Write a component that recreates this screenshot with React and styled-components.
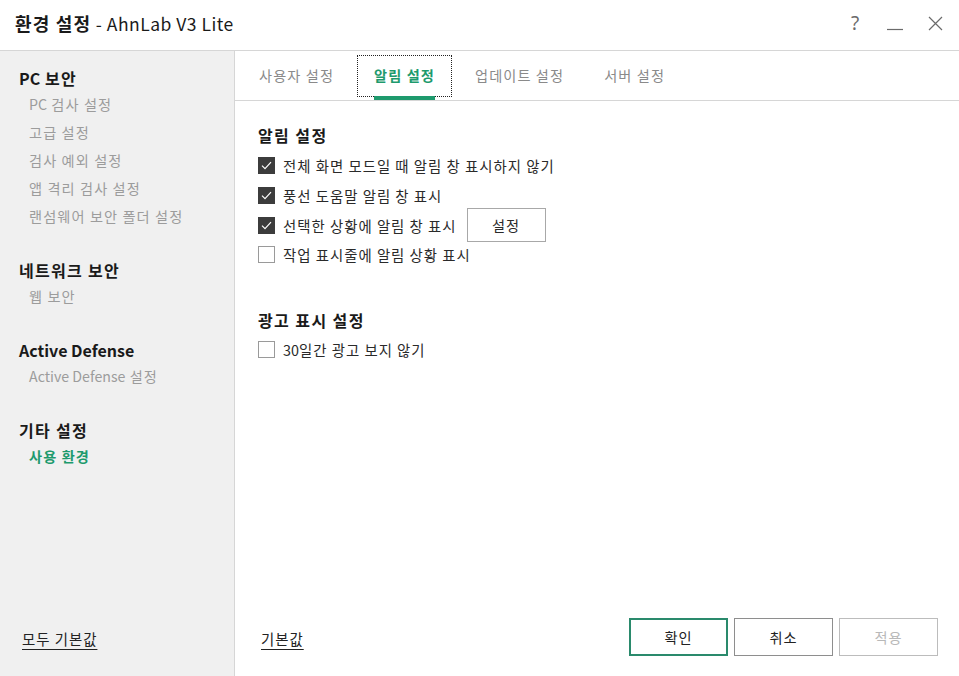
import React from "react";
import styled, { createGlobalStyle } from "styled-components";

const GREEN = "#1e9a6d";

const Global = createGlobalStyle`
  html, body { margin: 0; padding: 0; background: #fff; }
  body { font-family: "Noto Sans CJK KR", "Noto Sans", sans-serif; color: #222; }
  * { box-sizing: border-box; }
`;

const En = styled.span`
  letter-spacing: 0;
`;

const Window = styled.div`
  width: 959px;
  height: 676px;
  display: flex;
  flex-direction: column;
  background: #fff;
  overflow: hidden;
`;

const TitleBar = styled.div`
  height: 51px;
  flex: none;
  display: flex;
  align-items: center;
  padding: 0 0 4px 15px;
  border-bottom: 1px solid #d6d6d6;
`;

const Title = styled.div`
  font-size: 18px;
  line-height: 24px;
  color: #1a1a1a;
  flex: 1;
  b { font-weight: 700; letter-spacing: 1.2px; }
  span { font-weight: 400; font-size: 17.5px; letter-spacing: 0.5px; }
`;

const Controls = styled.div`
  display: flex;
  align-items: center;
  margin-right: 4px;
`;

const CtrlBtn = styled.div`
  width: 40px;
  height: 30px;
  display: flex;
  align-items: center;
  justify-content: center;
  color: #6b6b6b;
  font-size: 19px;
  font-family: "Noto Sans", sans-serif;
`;

const Body = styled.div`
  flex: 1;
  display: flex;
  min-height: 0;
`;

const Sidebar = styled.nav`
  width: 235px;
  flex: none;
  background: #f0f0f0;
  border-right: 1px solid #d6d6d6;
  display: flex;
  flex-direction: column;
  padding: 15px 0 26px 0;
`;

const Section = styled.div`
  display: flex;
  flex-direction: column;
  & + & { margin-top: 28px; }
`;

const SideHeading = styled.div`
  font-size: 16px;
  font-weight: 700;
  line-height: 24px;
  padding-left: 19px;
  letter-spacing: 1.3px;
  color: #1a1a1a;
`;

const SideItem = styled.div`
  font-size: 14.2px;
  line-height: 28px;
  padding-left: 29px;
  letter-spacing: 1.1px;
  color: ${(p) => (p.$active ? GREEN : "#9c9c9c")};
  font-weight: ${(p) => (p.$active ? 700 : 400)};
`;

const LinkText = styled.a`
  font-size: 14.4px;
  line-height: 20px;
  letter-spacing: 1px;
  color: #222;
  text-decoration: underline;
  text-underline-offset: 4px;
  text-decoration-thickness: 1px;
  cursor: pointer;
`;

const SideFooter = styled.div`
  margin-top: auto;
  padding-left: 22px;
`;

const Main = styled.div`
  flex: 1;
  display: flex;
  flex-direction: column;
  min-width: 0;
`;

const TabRow = styled.div`
  height: 50px;
  flex: none;
  display: flex;
  align-items: stretch;
  gap: 6px;
  padding-left: 7px;
  border-bottom: 1px solid #d6d6d6;
`;

const Tab = styled.div`
  position: relative;
  padding: 0 17px;
  display: flex;
  align-items: center;
  font-size: 14.2px;
  line-height: 20px;
  letter-spacing: 1.1px;
  padding-bottom: 1px;
  color: ${(p) => (p.$active ? GREEN : "#8a8a8a")};
  font-weight: ${(p) => (p.$active ? 700 : 400)};
  ${(p) =>
    p.$active &&
    `
    &::before {
      content: "";
      position: absolute;
      left: 0; right: 0; top: 4px; bottom: 3px;
      border: 1px dotted #222;
    }
    &::after {
      content: "";
      position: absolute;
      left: 17px; right: 17px; bottom: 0;
      height: 4px;
      background: ${GREEN};
    }
  `}
`;

const Content = styled.div`
  flex: 1;
  padding: 23px 23px 0 23px;
  display: flex;
  flex-direction: column;
`;

const Group = styled.div`
  display: flex;
  flex-direction: column;
  & + & { margin-top: 39px; }
`;

const GroupHeading = styled.div`
  font-size: 16px;
  font-weight: 700;
  line-height: 22px;
  letter-spacing: 1.4px;
  color: #1a1a1a;
  margin-bottom: ${(p) => p.$mb || 5}px;
`;

const Row = styled.label`
  height: 29.7px;
  display: flex;
  align-items: center;
  font-size: 14.4px;
  letter-spacing: 1px;
  color: #2a2a2a;
`;

const Box = styled.span`
  width: 17px;
  height: 17px;
  flex: none;
  margin-right: 8px;
  display: flex;
  align-items: center;
  justify-content: center;
  background: ${(p) => (p.$checked ? "#3c3c3c" : "#fff")};
  border: 1px solid ${(p) => (p.$checked ? "#3c3c3c" : "#9a9a9a")};
`;

const SmallButton = styled.button`
  margin: -2px 0 -2px 10px;
  width: 79px;
  height: 34px;
  background: #fff;
  border: 1px solid #a8a8a8;
  font-family: inherit;
  font-size: 14.2px;
  letter-spacing: 1px;
  color: #2a2a2a;
  padding: 0;
`;

const Footer = styled.div`
  height: 75px;
  flex: none;
  display: flex;
  align-items: center;
  padding: 0 21px 0 26px;
`;

const Buttons = styled.div`
  margin-left: auto;
  display: flex;
  gap: 6px;
  margin-top: -3px;
`;

const DialogButton = styled.button`
  width: 99px;
  height: 38px;
  background: #fff;
  font-family: inherit;
  font-size: 14.2px;
  letter-spacing: 1px;
  padding: 0;
  border: ${(p) =>
    p.$primary ? `2px solid #2a8a6c` : p.$disabled ? "1px solid #bcbcbc" : "1px solid #8e8e8e"};
  color: ${(p) => (p.$disabled ? "#b8b8b8" : "#222")};
`;

const Check = () => (
  <svg width="11" height="9" viewBox="0 0 11 9">
    <path d="M1 4.6 L4 7.6 L10 1.2" fill="none" stroke="#fff" strokeWidth="1.2" />
  </svg>
);

const CheckRow = ({ checked, children, extra }) => (
  <Row>
    <Box $checked={checked}>{checked && <Check />}</Box>
    {children}
    {extra}
  </Row>
);

export default function App() {
  return (
    <>
      <Global />
      <Window>
        <TitleBar>
          <Title>
            <b>환경 설정</b>
            <span> - AhnLab V3 Lite</span>
          </Title>
          <Controls>
            <CtrlBtn>?</CtrlBtn>
            <CtrlBtn>
              <svg width="16" height="16" viewBox="0 0 16 16">
                <path d="M0 14.5 H16" stroke="#6b6b6b" strokeWidth="1.2" />
              </svg>
            </CtrlBtn>
            <CtrlBtn>
              <svg width="15" height="15" viewBox="0 0 15 15">
                <path d="M1 1 L14 14 M14 1 L1 14" stroke="#6b6b6b" strokeWidth="1.2" />
              </svg>
            </CtrlBtn>
          </Controls>
        </TitleBar>
        <Body>
          <Sidebar>
            <Section>
              <SideHeading><En>PC</En> 보안</SideHeading>
              <SideItem><En>PC</En> 검사 설정</SideItem>
              <SideItem>고급 설정</SideItem>
              <SideItem>검사 예외 설정</SideItem>
              <SideItem>앱 격리 검사 설정</SideItem>
              <SideItem>랜섬웨어 보안 폴더 설정</SideItem>
            </Section>
            <Section>
              <SideHeading>네트워크 보안</SideHeading>
              <SideItem>웹 보안</SideItem>
            </Section>
            <Section>
              <SideHeading><En>Active Defense</En></SideHeading>
              <SideItem><En>Active Defense</En> 설정</SideItem>
            </Section>
            <Section>
              <SideHeading>기타 설정</SideHeading>
              <SideItem $active>사용 환경</SideItem>
            </Section>
            <SideFooter>
              <LinkText>모두 기본값</LinkText>
            </SideFooter>
          </Sidebar>
          <Main>
            <TabRow>
              <Tab>사용자 설정</Tab>
              <Tab $active>알림 설정</Tab>
              <Tab>업데이트 설정</Tab>
              <Tab>서버 설정</Tab>
            </TabRow>
            <Content>
              <Group>
                <GroupHeading>알림 설정</GroupHeading>
                <CheckRow checked>전체 화면 모드일 때 알림 창 표시하지 않기</CheckRow>
                <CheckRow checked>풍선 도움말 알림 창 표시</CheckRow>
                <CheckRow checked extra={<SmallButton>설정</SmallButton>}>
                  선택한 상황에 알림 창 표시
                </CheckRow>
                <CheckRow>작업 표시줄에 알림 상황 표시</CheckRow>
              </Group>
              <Group>
                <GroupHeading $mb={4}>광고 표시 설정</GroupHeading>
                <CheckRow><En>30</En>일간 광고 보지 않기</CheckRow>
              </Group>
            </Content>
            <Footer>
              <LinkText>기본값</LinkText>
              <Buttons>
                <DialogButton $primary>확인</DialogButton>
                <DialogButton>취소</DialogButton>
                <DialogButton $disabled>적용</DialogButton>
              </Buttons>
            </Footer>
          </Main>
        </Body>
      </Window>
    </>
  );
}
